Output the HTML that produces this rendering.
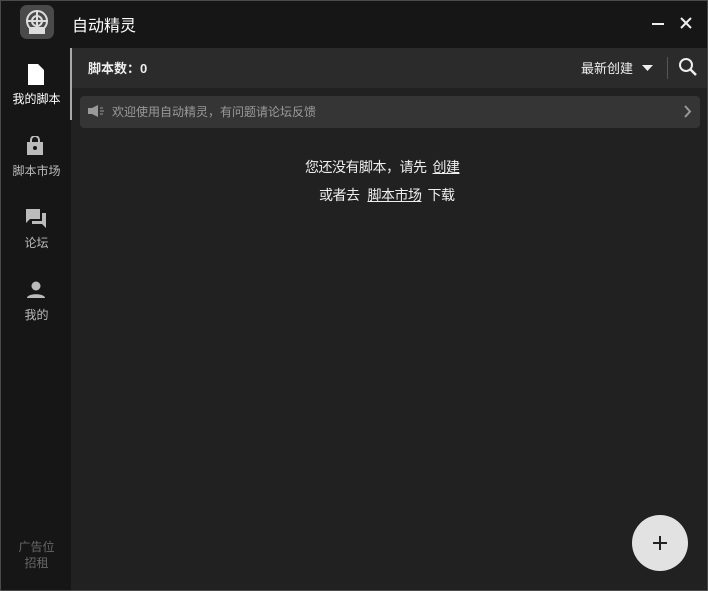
<!DOCTYPE html><html><head><meta charset="utf-8"><style>
*{margin:0;padding:0;box-sizing:border-box}
body{width:708px;height:591px;background:#161616;font-family:"Liberation Sans","Noto Sans CJK SC",sans-serif;position:relative;overflow:hidden;border:1px solid #4a4a4a}
.abs{position:absolute}
.item{position:absolute;left:0;width:71px;text-align:center}
.main{left:71px;top:48px;width:636px;height:542px;background:#212121}
</style></head><body>
<div class="abs" style="left:19px;top:4px;width:34px;height:34px;border-radius:7px;background:#4a4a4a">
<svg width="34" height="34" viewBox="0 0 34 34"><circle cx="17" cy="16" r="10" fill="none" stroke="#ddd" stroke-width="2"/><circle cx="17" cy="16" r="5" fill="none" stroke="#ddd" stroke-width="2"/><path d="M17 6v20M7 16h20" stroke="#ddd" stroke-width="2"/><rect x="9" y="22" width="16" height="7" fill="#ddd"/></svg></div>
<div class="abs" style="left:71px;top:11px;font-size:16px;color:#fff">自动精灵</div>
<div class="abs" style="left:651px;top:22px;width:12px;height:2px;background:#eee"></div>
<svg class="abs" style="left:679px;top:16px" width="12" height="12"><path d="M1 1L11 11M11 1L1 11" stroke="#eee" stroke-width="2"/></svg>
<div class="abs main" style="left:70px;top:47px"></div>
<div class="abs" style="left:70px;top:47px;width:636px;height:40px;background:#2b2b2b"></div>
<div class="abs" style="left:69px;top:47px;width:2px;height:72px;background:#aaa"></div>
<div class="abs" style="left:87px;top:57px;font-size:13px;color:#eee;font-weight:bold">脚本数：0</div>
<div class="abs" style="left:580px;top:57px;font-size:13px;color:#eee">最新创建</div>
<svg class="abs" style="left:641px;top:64px" width="12" height="6"><path d="M0 0h11L5.5 6z" fill="#eee"/></svg>
<div class="abs" style="left:666px;top:56px;width:1px;height:22px;background:#555"></div>
<svg class="abs" style="left:677px;top:56px" width="20" height="20"><circle cx="8" cy="8" r="6" fill="none" stroke="#eee" stroke-width="2"/><path d="M12.5 12.5L18 18" stroke="#eee" stroke-width="2.5"/></svg>
<div class="abs" style="left:79px;top:95px;width:620px;height:32px;background:#353535;border-radius:4px"></div>
<svg class="abs" style="left:86px;top:103px" width="18" height="14"><path d="M1 4h4l6-3v12l-6-3H1z" fill="#999"/><path d="M13 4h3M13 7h4M13 10h3" stroke="#999"/></svg>
<div class="abs" style="left:111px;top:102px;font-size:12px;color:#999">欢迎使用自动精灵，有问题请论坛反馈</div>
<svg class="abs" style="left:683px;top:104px" width="8" height="13"><path d="M1 1l5 5.5L1 12" fill="none" stroke="#999" stroke-width="2"/></svg>
<div class="abs" style="left:304px;top:156px;font-size:14px;color:#eee;letter-spacing:-0.5px">您还没有脚本，请先<u style="margin-left:6px">创建</u></div>
<div class="abs" style="left:318px;top:184px;font-size:14px;color:#eee;letter-spacing:-0.5px">或者去<u style="margin-left:8px">脚本市场</u><span style="margin-left:6px">下载</span></div>
<svg class="abs" style="left:26px;top:63px" width="18" height="22"><path d="M1 0h10l6 6v15H1z" fill="#fff"/></svg>
<div class="abs item" style="top:89px;font-size:12px;color:#fff">我的脚本</div>
<svg class="abs" style="left:24px;top:135px" width="20" height="20"><path d="M2 6h16v13H2z" fill="#bbb"/><path d="M6 6V4a4 4 0 0 1 8 0v2" fill="none" stroke="#bbb" stroke-width="2"/><circle cx="10" cy="12" r="2" fill="#161616"/></svg>
<div class="abs item" style="top:161px;font-size:12px;color:#bbb">脚本市场</div>
<svg class="abs" style="left:24px;top:207px" width="22" height="20"><path d="M1 1h14v10H5l-4 4z" fill="#bbb"/><path d="M17 5h4v15l-4-4H7v-3h10z" fill="#bbb"/></svg>
<div class="abs item" style="top:233px;font-size:12px;color:#bbb">论坛</div>
<svg class="abs" style="left:25px;top:280px" width="20" height="18"><circle cx="10" cy="5" r="4.5" fill="#bbb"/><path d="M1 17c0-5 18-5 18 0z" fill="#bbb"/></svg>
<div class="abs item" style="top:305px;font-size:12px;color:#bbb">我的</div>
<div class="abs item" style="top:538px;font-size:12px;color:#666;line-height:16px">广告位<br>招租</div>
<div class="abs" style="left:631px;top:514px;width:56px;height:56px;border-radius:50%;background:#e2e2e2"></div>
<svg class="abs" style="left:652px;top:535px" width="14" height="14"><path d="M7 0v14M0 7h14" stroke="#222" stroke-width="2"/></svg>
</body></html>
